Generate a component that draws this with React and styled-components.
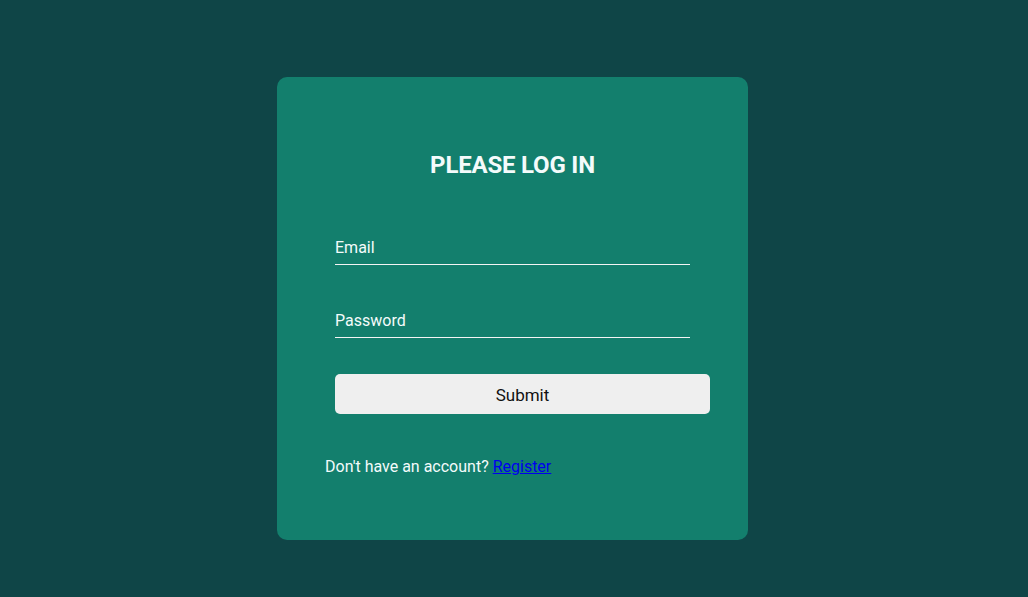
import React from "react";
import styled, { createGlobalStyle } from "styled-components";

const Global = createGlobalStyle`
  html, body { margin: 0; padding: 0; }
  body {
    background: #0f4547;
    font-family: Roboto, "Liberation Sans", sans-serif;
    min-height: 597px;
  }
`;

const Page = styled.div`
  display: flex;
  justify-content: center;
  padding-top: 77px;
  padding-right: 3px;
`;

const Card = styled.div`
  width: 471px;
  height: 463px;
  box-sizing: border-box;
  background: #137f6d;
  border-radius: 10px;
  padding: 74px 0 0 48px;
  display: flex;
  flex-direction: column;
`;

const Title = styled.h1`
  margin: 0;
  padding-right: 48px;
  font-size: 24px;
  line-height: 28px;
  font-weight: 700;
  letter-spacing: -0.2px;
  color: #f4fbfb;
  text-align: center;
`;

const Form = styled.form`
  display: flex;
  flex-direction: column;
  padding-left: 10px;
  margin-top: 55px;
`;

const Input = styled.input`
  width: 355px;
  box-sizing: border-box;
  background: transparent;
  border: none;
  border-bottom: 1px solid #f4f4f4;
  padding: 4px 0 7px;
  margin-top: ${(p) => p.$gap || 0}px;
  font-family: inherit;
  font-size: 16px;
  line-height: 19px;
  color: #fff;
  outline: none;
  &::placeholder { color: #f4fbfb; opacity: 1; }
`;

const Button = styled.button`
  width: 375px;
  height: 40px;
  margin-top: 36px;
  padding: 1px 0 0;
  border: none;
  border-radius: 5px;
  background: #efefef;
  color: #111;
  font-family: inherit;
  font-size: 17px;
  cursor: pointer;
`;

const Footer = styled.p`
  margin: 43px 0 0;
  font-size: 16px;
  line-height: 19px;
  color: #f4fbfb;
`;

const Link = styled.a`
  color: #0000ee;
  text-decoration: underline;
`;

export default function App() {
  return (
    <>
      <Global />
      <Page>
        <Card>
          <Title>PLEASE LOG IN</Title>
          <Form onSubmit={(e) => e.preventDefault()}>
            <Input type="email" placeholder="Email" />
            <Input type="password" placeholder="Password" $gap={42} />
            <Button type="submit">Submit</Button>
          </Form>
          <Footer>
            Don't have an account? <Link href="#">Register</Link>
          </Footer>
        </Card>
      </Page>
    </>
  );
}
